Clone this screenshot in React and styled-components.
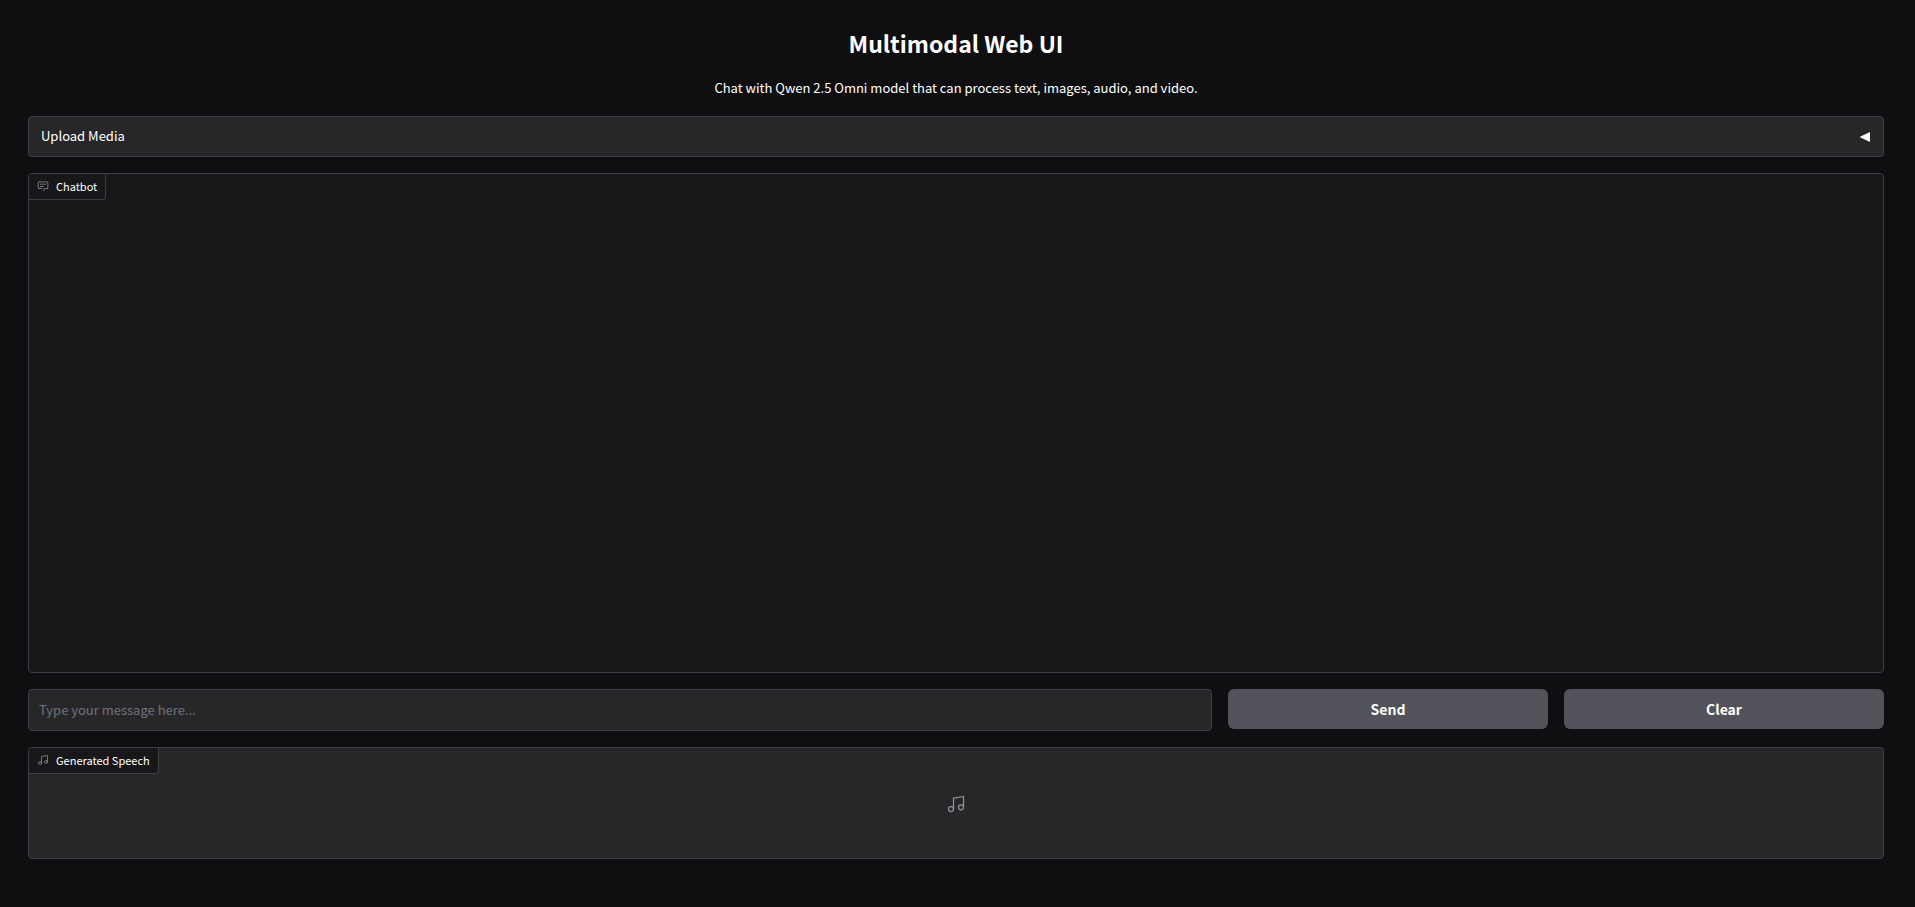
import React, { useState } from "react";
import styled, { createGlobalStyle } from "styled-components";

const GlobalStyle = createGlobalStyle`
  *, *::before, *::after {
    box-sizing: border-box;
  }
  body {
    margin: 0;
    background: #0f0f11;
    color: #f4f4f5;
    font-family: "Source Sans Pro", "Noto Sans CJK SC", "Open Sans", sans-serif;
    font-size: 13px;
    line-height: 20px;
  }
`;

const Page = styled.main`
  display: flex;
  flex-direction: column;
  gap: 16px;
  padding: 28px 31px 48px 28px;
`;

const Header = styled.header`
  display: flex;
  flex-direction: column;
  gap: 18px;
  color: #fff;
  text-align: center;
`;

const Title = styled.h1`
  margin: 0;
  font-size: 23px;
  line-height: 30px;
  font-weight: 600;
`;

const Intro = styled.p`
  margin: 0;
  line-height: 24px;
`;

const Panel = styled.section`
  min-height: ${(p) => p.$height}px;
  border: 1px solid #3f3f46;
  border-radius: 4px;
  background: ${(p) => (p.$dark ? "#18181b" : "#27272a")};
  overflow: hidden;
  display: flex;
  flex-direction: column;
  align-items: flex-start;
`;

const AccordionToggle = styled.button`
  display: flex;
  justify-content: space-between;
  align-items: center;
  width: 100%;
  height: 39px;
  padding: 0 12px;
  border: 0;
  background: none;
  color: #fff;
  font: inherit;
  cursor: pointer;
`;

const AccordionTitle = styled.span`
  padding-bottom: 2px;
`;

const Arrow = styled.svg`
  width: 12px;
  height: 12px;
  transform: ${(p) => (p.$open ? "rotate(-90deg)" : "none")};
`;

const Label = styled.h2`
  display: flex;
  align-items: center;
  gap: 7px;
  height: 26px;
  margin: 0;
  padding: 0 8px 2px;
  border: solid #3f3f46;
  border-width: 0 1px 1px 0;
  border-radius: 0 0 4px 0;
  background: #18181b;
  color: #fff;
  font-size: 11px;
  line-height: 16px;
  font-weight: 400;
`;

const Icon = styled.svg`
  width: ${(p) => p.$size}px;
  height: ${(p) => p.$size}px;
  color: #929298;
`;

const Composer = styled.form`
  display: flex;
  align-items: flex-start;
  gap: 16px;
`;

const MessageInput = styled.input`
  flex: 4 1 0;
  min-width: 0;
  height: 42px;
  padding: 0 10px 2px;
  border: 1px solid #3f3f46;
  border-radius: 4px;
  background: #27272a;
  color: #f4f4f5;
  font: inherit;

  &::placeholder {
    color: #71717a;
    opacity: 1;
  }
`;

const ActionButton = styled.button`
  flex: 1 1 0;
  min-width: 320px;
  height: 40px;
  border: 0;
  border-radius: 6px;
  background: #52525b;
  color: #fff;
  font-family: inherit;
  font-size: 14px;
  line-height: 24px;
  font-weight: 600;
  cursor: pointer;
`;

const EmptyState = styled.div`
  flex: 1;
  align-self: stretch;
  display: flex;
  align-items: center;
  justify-content: center;
  padding-bottom: 24px;
`;

function ChatIcon({ size }) {
  return (
    <Icon $size={size} viewBox="0 0 32 32" fill="currentColor" aria-hidden="true">
      <path d="M17.74 30L16 29l4-7h6a2 2 0 0 0 2-2V8a2 2 0 0 0-2-2H6a2 2 0 0 0-2 2v12a2 2 0 0 0 2 2h9v2H6a4 4 0 0 1-4-4V8a4 4 0 0 1 4-4h20a4 4 0 0 1 4 4v12a4 4 0 0 1-4 4h-4.84Z" />
      <path d="M8 10h16v2H8zm0 6h10v2H8z" />
    </Icon>
  );
}

function MusicIcon({ size }) {
  return (
    <Icon
      $size={size}
      viewBox="0 0 24 24"
      fill="none"
      stroke="currentColor"
      strokeWidth="1.5"
      strokeLinecap="round"
      strokeLinejoin="round"
      aria-hidden="true"
    >
      <path d="M9 18V5l12-2v13" />
      <circle cx="6" cy="18" r="3" />
      <circle cx="18" cy="16" r="3" />
    </Icon>
  );
}

export default function App() {
  const [open, setOpen] = useState(false);
  const [message, setMessage] = useState("");

  return (
    <>
      <GlobalStyle />
      <Page>
        <Header>
          <Title>Multimodal Web UI</Title>
          <Intro>Chat with Qwen 2.5 Omni model that can process text, images, audio, and video.</Intro>
        </Header>

        <Panel $height={41}>
          <AccordionToggle type="button" aria-expanded={open} onClick={() => setOpen(!open)}>
            <AccordionTitle>Upload Media</AccordionTitle>
            <Arrow $open={open} viewBox="0 0 12 12" aria-hidden="true">
              <path d="M0.5 6L11 1V11Z" fill="currentColor" />
            </Arrow>
          </AccordionToggle>
        </Panel>

        <Panel $height={500} $dark>
          <Label>
            <ChatIcon size={12} />
            Chatbot
          </Label>
        </Panel>

        <Composer onSubmit={(e) => e.preventDefault()}>
          <MessageInput
            type="text"
            aria-label="Message"
            placeholder="Type your message here..."
            value={message}
            onChange={(e) => setMessage(e.target.value)}
          />
          <ActionButton type="submit">Send</ActionButton>
          <ActionButton type="button" onClick={() => setMessage("")}>
            Clear
          </ActionButton>
        </Composer>

        <Panel $height={112}>
          <Label>
            <MusicIcon size={12} />
            Generated Speech
          </Label>
          <EmptyState>
            <MusicIcon size={20} />
          </EmptyState>
        </Panel>
      </Page>
    </>
  );
}
